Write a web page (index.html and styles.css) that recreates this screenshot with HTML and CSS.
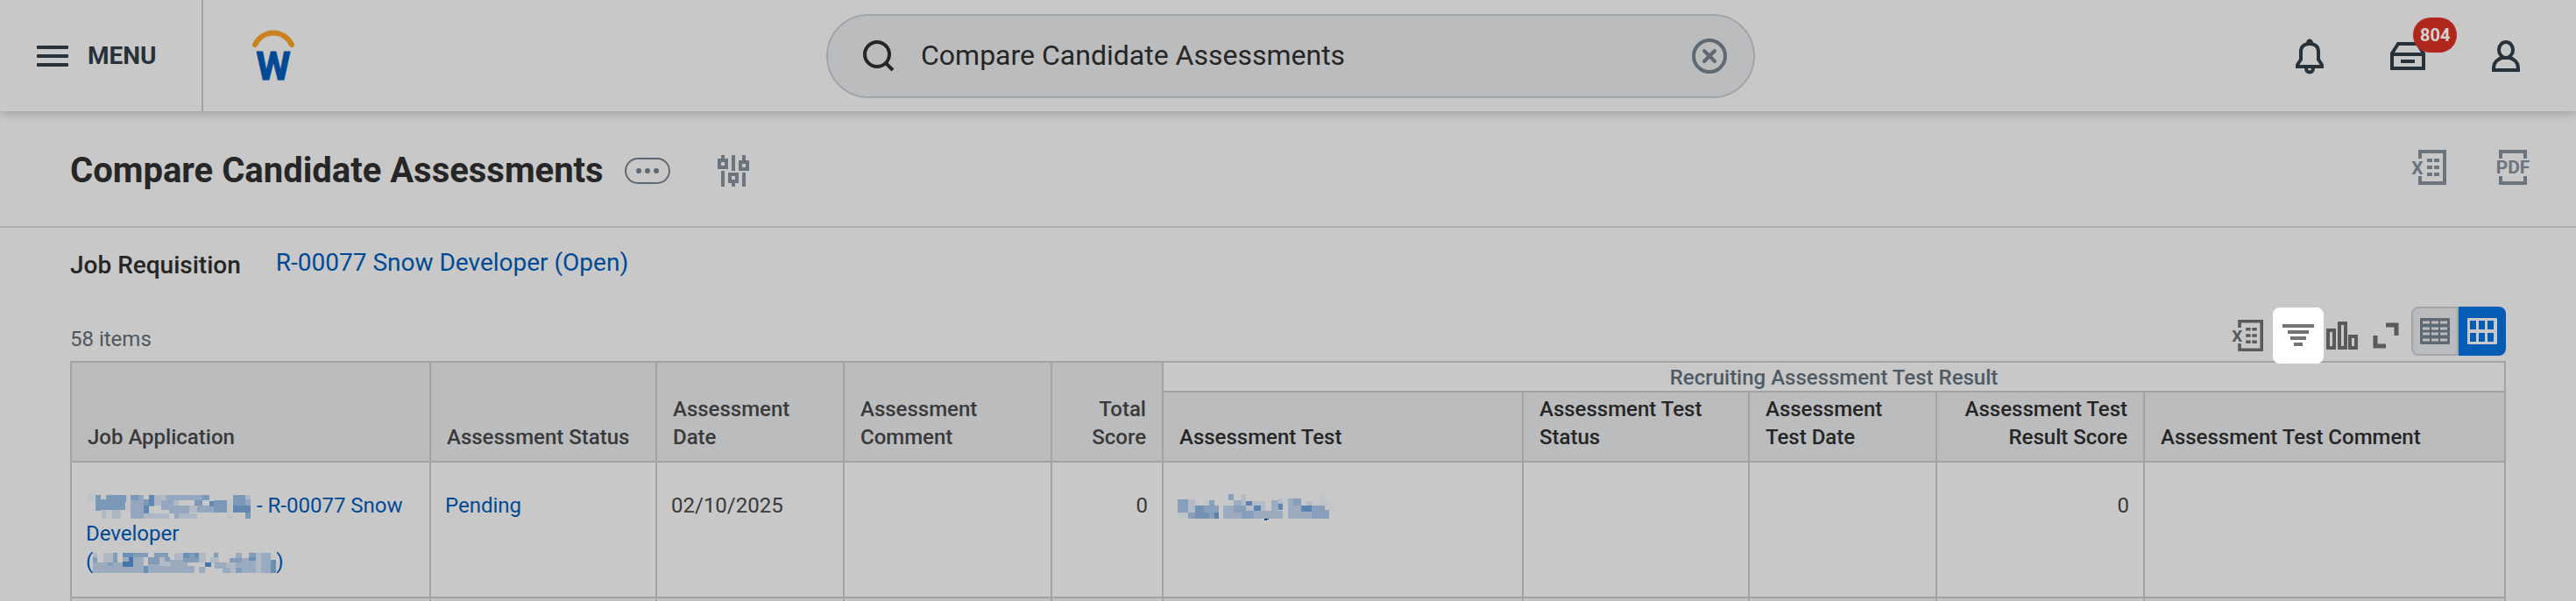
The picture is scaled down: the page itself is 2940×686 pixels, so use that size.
FILE: index.html
```html
<!DOCTYPE html>
<html lang="en">
  <head>
    <meta charset="UTF-8" />
    <meta name="viewport" content="width=device-width, initial-scale=1.0" />
    <title>Compare Candidate Assessments</title>
    <link rel="stylesheet" href="styles.css">
  </head>
  <body>
    <!-- top bar -->
    <header class="topbar">
      <div class="topbar-left">
        <button class="menu-button" type="button">
          <svg width="36" height="24" viewBox="0 0 36 24" fill="currentColor">
            <rect width="36" height="4" rx="1" />
            <rect y="10" width="36" height="4" rx="1" />
            <rect y="20" width="36" height="4" rx="1" />
          </svg>
          MENU
        </button>
        <a class="logo" href="#" aria-label="Home">
          <svg width="56" height="84" viewBox="-4 -12 56 84">
            <path d="M3 17C12 -1 36 -1 45 17" fill="none" stroke="#ca811f" stroke-width="6" stroke-linecap="round" />
            <text class="logo-letter" x="24" y="57" text-anchor="middle">W</text>
          </svg>
        </a>
      </div>

      <label class="search">
        <svg width="36" height="36" viewBox="0 0 36 36" fill="none" stroke="#262626" stroke-width="4">
          <circle cx="16" cy="16" r="14" />
          <path d="M26 26L34 34" />
        </svg>
        <input type="text" aria-label="Search" value="Compare Candidate Assessments" />
        <button class="icon-button" type="button" aria-label="Clear">
          <svg width="40" height="40" viewBox="0 0 40 40" fill="none" stroke="#5f6973" stroke-width="4">
            <circle cx="20" cy="20" r="18" />
            <path d="M14 14L26 26M26 14L14 26" stroke-linecap="round" />
          </svg>
        </button>
      </label>

      <nav class="topbar-right">
        <button class="icon-button" type="button" aria-label="Notifications">
          <svg width="48" height="48" viewBox="0 0 48 48" fill="none" stroke="#28323a" stroke-width="4">
            <path d="M10 36V34L14 28V19C14 13 18 10 24 10S34 13 34 19V28L38 34V36Z" />
            <path d="M20 38C20 44 28 44 28 38" />
            <path d="M20 9C20 3 28 3 28 9Z" fill="#28323a" stroke="none" />
          </svg>
        </button>
        <button class="icon-button" type="button" aria-label="Inbox">
          <svg width="48" height="48" viewBox="0 0 48 48" fill="none" stroke="#28323a" stroke-width="4">
            <path d="M6 22H42V38H6ZM6 21L13 10H35L42 21" />
            <path d="M16 30H32" />
          </svg>
          <span class="badge">804</span>
        </button>
        <button class="icon-button" type="button" aria-label="Profile">
          <svg width="48" height="48" viewBox="0 0 48 48" fill="none" stroke="#28323a" stroke-width="4">
            <ellipse cx="24" cy="17" rx="8" ry="9" />
            <path d="M10 40V38C10 31 15 27 20 26H28C33 27 38 31 38 38V40Z" />
          </svg>
        </button>
      </nav>
    </header>

    <!-- page title -->
    <div class="title-bar">
      <div class="title-left">
        <h1>Compare Candidate Assessments</h1>
        <button class="related" type="button" aria-label="Related actions">
          <svg width="28" height="6" viewBox="0 0 28 6" fill="#5f6973">
            <circle cx="4" cy="3" r="3" />
            <circle cx="14" cy="3" r="3" />
            <circle cx="24" cy="3" r="3" />
          </svg>
        </button>
        <button class="icon-button" type="button" aria-label="Configure">
          <svg width="36" height="36" viewBox="0 0 36 36" fill="none" stroke="#6c757d" stroke-width="4">
            <path d="M6 0V6M2 6H10V14H2ZM18 0V18M30 0V8M26 8H34V16H26Z" />
            <path d="M6 18V36M14 22H22V30H14ZM18 30V36M30 20V36" />
          </svg>
        </button>
      </div>
      <div class="title-right">
        <button class="icon-button" type="button" aria-label="Export to Excel">
          <svg width="40" height="40" viewBox="0 0 40 40">
            <path d="M10 10V2H38V38H10V30" fill="none" stroke="#6c757d" stroke-width="4" />
            <path d="M18 12H32M18 20H32M18 28H32" fill="none" stroke="#6c757d" stroke-width="4" stroke-dasharray="6 2" />
            <text class="icon-text" x="7" y="28" text-anchor="middle">X</text>
          </svg>
        </button>
        <button class="icon-button" type="button" aria-label="Export to PDF">
          <svg width="40" height="40" viewBox="0 0 40 40">
            <path d="M6 10V2H34V10M6 30V38H34V30" fill="none" stroke="#6c757d" stroke-width="4" />
            <text class="icon-text" x="20" y="27" text-anchor="middle">PDF</text>
          </svg>
        </button>
      </div>
    </div>

    <main class="content">
      <dl class="requisition">
        <dt>Job Requisition</dt>
        <dd><a href="#">R-00077 Snow Developer (Open)</a></dd>
      </dl>

      <!-- grid toolbar -->
      <div class="toolbar">
        <span class="count">58 items</span>
        <div class="tools">
          <button class="tool" type="button" aria-label="Export to Excel">
            <svg width="36" height="36" viewBox="0 0 40 40">
              <path d="M10 10V2H38V38H10V30" fill="none" stroke="#5a5a5a" stroke-width="4" />
              <path d="M18 12H32M18 20H32M18 28H32" fill="none" stroke="#5a5a5a" stroke-width="4" stroke-dasharray="6 2" />
              <text class="icon-text dark" x="7" y="28" text-anchor="middle">X</text>
            </svg>
          </button>
          <button class="tool active" type="button" aria-label="Filter">
            <svg width="36" height="26" viewBox="0 0 36 26" fill="none" stroke="#737373" stroke-width="4">
              <path d="M0 2H36M6 9H30M9 16H27M13 23H23" />
            </svg>
          </button>
          <button class="tool narrow" type="button" aria-label="Chart">
            <svg width="36" height="32" viewBox="0 0 36 32" fill="none" stroke="#5a5a5a" stroke-width="4">
              <path d="M2 10H9V30H2ZM15 2H22V30H15ZM27 17H34V30H27Z" />
            </svg>
          </button>
          <button class="tool" type="button" aria-label="Expand">
            <svg width="30" height="30" viewBox="0 0 30 30" fill="none" stroke="#5a5a5a" stroke-width="5">
              <path d="M15 3H27V15M3 15V27H15" />
            </svg>
          </button>
          <div class="view-toggle">
            <button type="button" aria-label="Table view">
              <svg width="34" height="30" viewBox="0 0 34 30">
                <rect width="34" height="30" rx="1" fill="#5f6973" />
                <path d="M3 5H31M3 12H31M3 18H31M3 25H31" fill="none" stroke="#bbbcbe" stroke-width="3" stroke-dasharray="8 2" />
              </svg>
            </button>
            <button class="selected" type="button" aria-label="Grid view">
              <svg width="34" height="30" viewBox="0 0 34 30">
                <rect width="34" height="30" rx="1" fill="#c8c8c8" />
                <path d="M3 8H31M3 22H31" fill="none" stroke="#055cb4" stroke-width="10" stroke-dasharray="7 3" />
              </svg>
            </button>
          </div>
        </div>
      </div>

      <table class="grid">
        <colgroup>
          <col class="col-job" />
          <col class="col-status" />
          <col class="col-date" />
          <col class="col-comment" />
          <col class="col-total" />
          <col class="col-test" />
          <col class="col-status" />
          <col class="col-date" />
          <col class="col-comment" />
          <col />
        </colgroup>
        <thead>
          <tr>
            <th rowspan="2">Job Application</th>
            <th rowspan="2">Assessment Status</th>
            <th rowspan="2">Assessment Date</th>
            <th rowspan="2">Assessment Comment</th>
            <th rowspan="2" class="num">Total Score</th>
            <th colspan="5" class="group">Recruiting Assessment Test Result</th>
          </tr>
          <tr class="sub">
            <th>Assessment Test</th>
            <th>Assessment Test Status</th>
            <th>Assessment Test Date</th>
            <th class="num">Assessment Test Result Score</th>
            <th>Assessment Test Comment</th>
          </tr>
        </thead>
        <tbody>
          <tr>
            <td>
              <a href="#"><svg class="masked name" width="186" height="27" viewBox="90 78 558 81" shape-rendering="crispEdges">
                <path fill="#c1c3c5" d="M90 78h27v21h-27zM153 129h21v30h-21zM222 78h15v54h-15zM300 129h18v30h-18zM567 93h21v66h-21z" />
                <path fill="#aeb8c4" d="M138 129h15v30h-15zM174 129h30v30h-30zM282 141h36v18h-36zM318 78h24v36h-24zM318 141h51v18h-51zM402 141h63v18h-63zM630 78h18v15h-18z" />
                <path fill="#94a7bf" d="M237 78h45v81h-45zM342 96h42v33h-42zM360 78h147v18h-147zM369 114h69v27h-69zM387 141h15v18h-15zM465 114h57v24h-57zM588 93h60v21h-60z" />
                <path fill="#7c98b8" d="M117 78h18v54h-18zM135 93h84v36h-84zM153 78h69v24h-69zM237 78h30v18h-30zM282 93h36v24h-36zM456 96h27v18h-27zM483 78h24v18h-24zM522 96h45v42h-45zM588 78h42v36h-42zM630 138h18v21h-18z" />
                <path fill="#6187b2" d="M282 114h18v27h-18zM300 78h18v36h-18zM507 99h15v18h-15zM588 114h60v24h-60z" />
                <path fill="#b2bac3" d="M342 78h18v18h-18zM384 96h18v18h-18zM438 114h27v24h-27z" />
              </svg> - R-00077 Snow Developer</a><br />
              <a href="#">(<svg class="masked" width="209" height="23" viewBox="111 267 627 69" shape-rendering="crispEdges">
                <path fill="#b1bac4" d="M111 267h15v15h-15zM147 267h33v33h-33zM338 282h33v30h-33zM390 267h30v24h-30zM473 267h24v33h-24zM513 282h30v18h-30zM567 300h33v36h-33zM669 267h18v69h-18z" />
                <path fill="#9aabc0" d="M111 300h102v36h-102zM213 267h36v69h-36zM249 282h36v54h-36zM300 300h38v36h-38zM338 312h121v24h-121zM375 291h60v24h-60zM474 315h21v21h-21zM528 300h39v21h-39zM555 318h27v18h-27zM600 267h21v69h-21zM621 285h48v51h-48zM687 267h33v69h-33z" />
                <path fill="#839db9" d="M111 282h15v18h-15zM180 267h15v33h-15zM162 300h18v12h-18zM249 267h51v15h-51zM300 282h38v24h-38zM321 267h48v15h-48zM357 282h18v15h-18zM420 267h39v33h-39zM435 285h39v15h-39zM525 267h15v15h-15zM579 285h42v15h-42zM600 318h21v18h-21zM645 267h24v24h-24z" />
                <path fill="#6b90b5" d="M213 267h36v15h-36zM285 312h15v24h-15zM459 267h15v18h-15zM420 267h21v18h-21zM645 282h24v12h-24zM720 291h18v45h-18z" />
                <path fill="#4876a9" d="M213 297h36v18h-36zM234 282h15v18h-15zM495 300h21v15h-21z" />
              </svg>)</a>
            </td>
            <td><a href="#">Pending</a></td>
            <td>02/10/2025</td>
            <td></td>
            <td class="num">0</td>
            <td>
              <a href="#" aria-label="Assessment test"><svg class="masked" width="180" height="30" viewBox="102 60 540 90" shape-rendering="crispEdges">
                <path fill="#c1c4c7" d="M102 123h36v21h-36zM192 81h18v18h-18zM462 78h18v15h-18zM588 60h18v39h-18zM606 78h15v21h-15zM621 99h18v15h-18z" />
                <path fill="#b3bcc6" d="M138 78h24v21h-24zM138 99h24v24h-24zM321 60h15v39h-15zM336 99h66v18h-66zM357 84h45v15h-45zM447 75h15v18h-15zM543 84h18v15h-18z" />
                <path fill="#9cabbd" d="M258 99h36v45h-36zM294 81h27v18h-27zM363 117h99v27h-99zM423 81h24v63h-24zM480 75h45v69h-45zM525 117h36v27h-36zM294 123h27v21h-27z" />
                <path fill="#879fba" d="M102 78h36v45h-36zM138 123h24v21h-24zM210 81h18v63h-18zM192 99h51v24h-51zM276 60h18v21h-18zM294 99h42v24h-42zM321 117h42v27h-42zM498 75h27v24h-27zM561 99h45v45h-45zM606 114h15v30h-15z" />
                <path fill="#7392b5" d="M162 99h30v45h-30zM192 123h18v21h-18z" />
                <path fill="#5a83b0" d="M228 123h15v21h-15zM336 84h21v15h-21zM363 99h24v18h-24zM447 93h15v21h-15zM525 99h36v21h-36z" />
                <path fill="#004a95" d="M399 144h14v3h-5v3h-9z" />
              </svg></a>
            </td>
            <td></td>
            <td></td>
            <td class="num">0</td>
            <td></td>
          </tr>
          <tr class="alt">
            <td></td><td></td><td></td><td></td><td></td>
            <td></td><td></td><td></td><td></td><td></td>
          </tr>
        </tbody>
      </table>
    </main>
  </body>
</html>
```
FILE: styles.css
```css
* {
  box-sizing: border-box;
}

body {
  margin: 0;
  height: 100vh;
  overflow: hidden;
  background-color: #c8c8c8;
  color: #262626;
  font-family: Roboto, "Liberation Sans", sans-serif;
  font-size: 24px;
  line-height: 32px;
}

a {
  color: #004a95;
  text-decoration: none;
}

button {
  font-family: inherit;
  color: inherit;
  background: none;
  border: none;
  padding: 0;
  cursor: pointer;
}

svg {
  display: block;
}

/* top bar */
.topbar {
  position: relative;
  display: grid;
  grid-template-columns: 1fr minmax(0, 1060px) 1fr;
  align-items: center;
  height: 127px;
  padding-left: 6px;
  box-shadow: 0 2px 10px rgba(0, 0, 0, 0.24);
}

.topbar-left {
  display: flex;
  align-items: center;
  height: 100%;
}

.menu-button {
  display: flex;
  align-items: center;
  gap: 22px;
  height: 100%;
  padding: 0 52px 0 36px;
  border-right: 2px solid #9ea5aa;
  font-size: 28px;
  font-weight: 700;
  color: #28323a;
}

.logo {
  margin-left: 52px;
}

.logo-letter {
  font-size: 45px;
  font-weight: 700;
  fill: #004a95;
  stroke: #004a95;
  stroke-width: 1px;
}

.search {
  display: flex;
  align-items: center;
  gap: 30px;
  height: 96px;
  padding: 0 30px 0 40px;
  background-color: #bbbcbe;
  border: 2px solid #a1a5aa;
  border-radius: 48px;
}

.search input {
  flex: 1;
  min-width: 0;
  padding: 0 0 2px;
  border: none;
  outline: none;
  background: none;
  color: #262626;
  font-family: inherit;
  font-size: 32px;
}

.topbar-right {
  display: flex;
  justify-content: flex-end;
  gap: 64px;
  padding-right: 56px;
}

.icon-button {
  position: relative;
}

.badge {
  position: absolute;
  top: -20px;
  left: 30px;
  padding: 0 8px;
  border-radius: 20px;
  background-color: #b0271b;
  color: #d2d2d2;
  font-size: 20px;
  font-weight: 700;
  line-height: 40px;
}

/* page title */
.title-bar {
  display: flex;
  justify-content: space-between;
  align-items: center;
  height: 133px;
  padding: 0 52px 0 80px;
  border-bottom: 2px solid #a9aeb1;
}

.title-left {
  display: flex;
  align-items: center;
  padding-top: 4px;
}

h1 {
  margin: 0;
  font-size: 40px;
  line-height: 48px;
}

.related {
  display: flex;
  align-items: center;
  justify-content: center;
  width: 52px;
  height: 30px;
  margin: 0 54px 0 24px;
  border: 2px solid #5f6973;
  border-radius: 15px;
}

.title-right {
  display: flex;
  gap: 56px;
  padding-bottom: 4px;
}

.icon-text {
  font-size: 21px;
  font-weight: 700;
  fill: #6c757d;
}

.icon-text.dark {
  fill: #5a5a5a;
}

/* content */
.content {
  padding: 24px 80px 0;
}

.requisition {
  display: flex;
  gap: 40px;
  margin: 0;
  height: 66px;
  font-size: 28px;
}

.requisition dt {
  padding-top: 3px;
  font-weight: 500;
}

.requisition dd {
  margin: 0;
}

.toolbar {
  display: flex;
  justify-content: space-between;
  height: 62px;
}

.count {
  padding-top: 21px;
  color: #4f5860;
}

.tools {
  display: flex;
  align-items: flex-start;
}

.tool {
  display: flex;
  align-items: center;
  justify-content: center;
  width: 58px;
  height: 64px;
  margin-top: 1px;
}

.tool.active {
  position: relative;
  background-color: #fff;
  border-radius: 8px;
}

.tool.narrow {
  width: 42px;
}

.view-toggle {
  display: flex;
}

.view-toggle button {
  display: flex;
  align-items: center;
  justify-content: center;
  width: 54px;
  height: 56px;
  background-color: #bbbcbe;
  border: 2px solid #a1a5aa;
  border-radius: 8px 0 0 8px;
}

.view-toggle .selected {
  background-color: #055cb4;
  border-color: #055cb4;
  border-radius: 0 8px 8px 0;
}

/* grid */
.grid {
  width: 100%;
  table-layout: fixed;
  border-collapse: collapse;
}

.col-job { width: 410px; }
.col-status { width: 258px; }
.col-date { width: 214px; }
.col-comment { width: 237px; }
.col-total { width: 127px; }
.col-test { width: 411px; }

.grid th,
.grid td {
  border: 2px solid #a3a3a3;
  text-align: left;
}

.grid th {
  padding: 3px 18px 11px;
  background-color: #bbbcbe;
  color: #3a3a3a;
  font-weight: 500;
  vertical-align: bottom;
}

.grid .sub th {
  color: #262626;
}

.grid th.group {
  padding: 2px 0 0;
  background-color: #c8c8c8;
  color: #4f5b64;
  line-height: 30px;
  text-align: center;
}

.grid td {
  padding: 33px 16px 24px;
  color: #3a3a3a;
  vertical-align: top;
}

.grid .num {
  text-align: right;
}

.grid .alt td {
  background-color: #c1c1c1;
}

.masked {
  display: inline-block;
  vertical-align: middle;
}

.masked.name {
  margin: 0 1px 0 2px;
}
```
